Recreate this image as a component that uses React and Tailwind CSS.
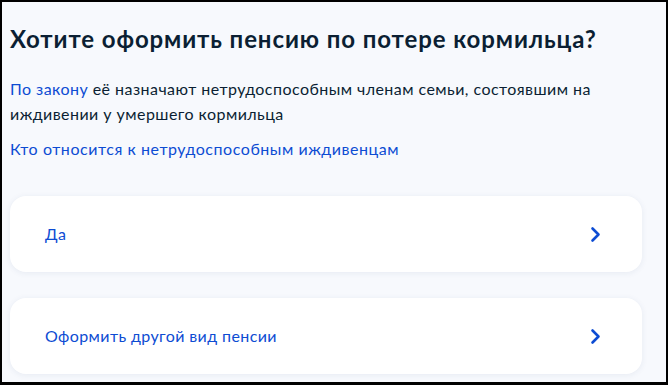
import React from "react";

function Chevron() {
  return (
    <svg width="11" height="17" viewBox="0 0 11 17" fill="none">
      <path d="M2.5 2.5l6 6-6 6" stroke="#0d4cd3" strokeWidth="2.6" strokeLinecap="round" strokeLinejoin="round" />
    </svg>
  );
}

function Option({ label }) {
  return (
    <div className="flex h-[76px] items-center justify-between rounded-2xl bg-white pl-[35px] pr-[41px] shadow-[0_1px_6px_rgba(40,60,120,0.08)]">
      <span className="text-[16px] tracking-[0.4px] text-[#0d4cd3]">{label}</span>
      <Chevron />
    </div>
  );
}

export default function App() {
  return (
    <div
      className="h-[385px] w-[668px] overflow-hidden border-2 border-b-[3px] border-black bg-[#f7f9fd] text-[#0b1f33]"
      style={{ fontFamily: "Lato, 'Noto Sans', sans-serif" }}
    >
      <div className="px-[8px] pt-[21px] pr-[24px]">
        <h1 className="text-[24px] font-bold leading-[32px] tracking-[0.9px]">
          Хотите оформить пенсию по потере кормильца?
        </h1>
        <p className="mt-[21px] max-w-[600px] text-[16px] leading-[25px] tracking-[0.45px]">
          <span className="text-[#0d4cd3]">По закону</span> её назначают нетрудоспособным членам семьи, состоявшим на иждивении у умершего кормильца
        </p>
        <p className="mt-[10px] text-[16px] leading-[25px] tracking-[0.55px] text-[#0d4cd3]">
          Кто относится к нетрудоспособным иждивенцам
        </p>
        <div className="mt-[35px] flex flex-col gap-[26px]">
          <Option label="Да" />
          <Option label="Оформить другой вид пенсии" />
        </div>
      </div>
    </div>
  );
}
